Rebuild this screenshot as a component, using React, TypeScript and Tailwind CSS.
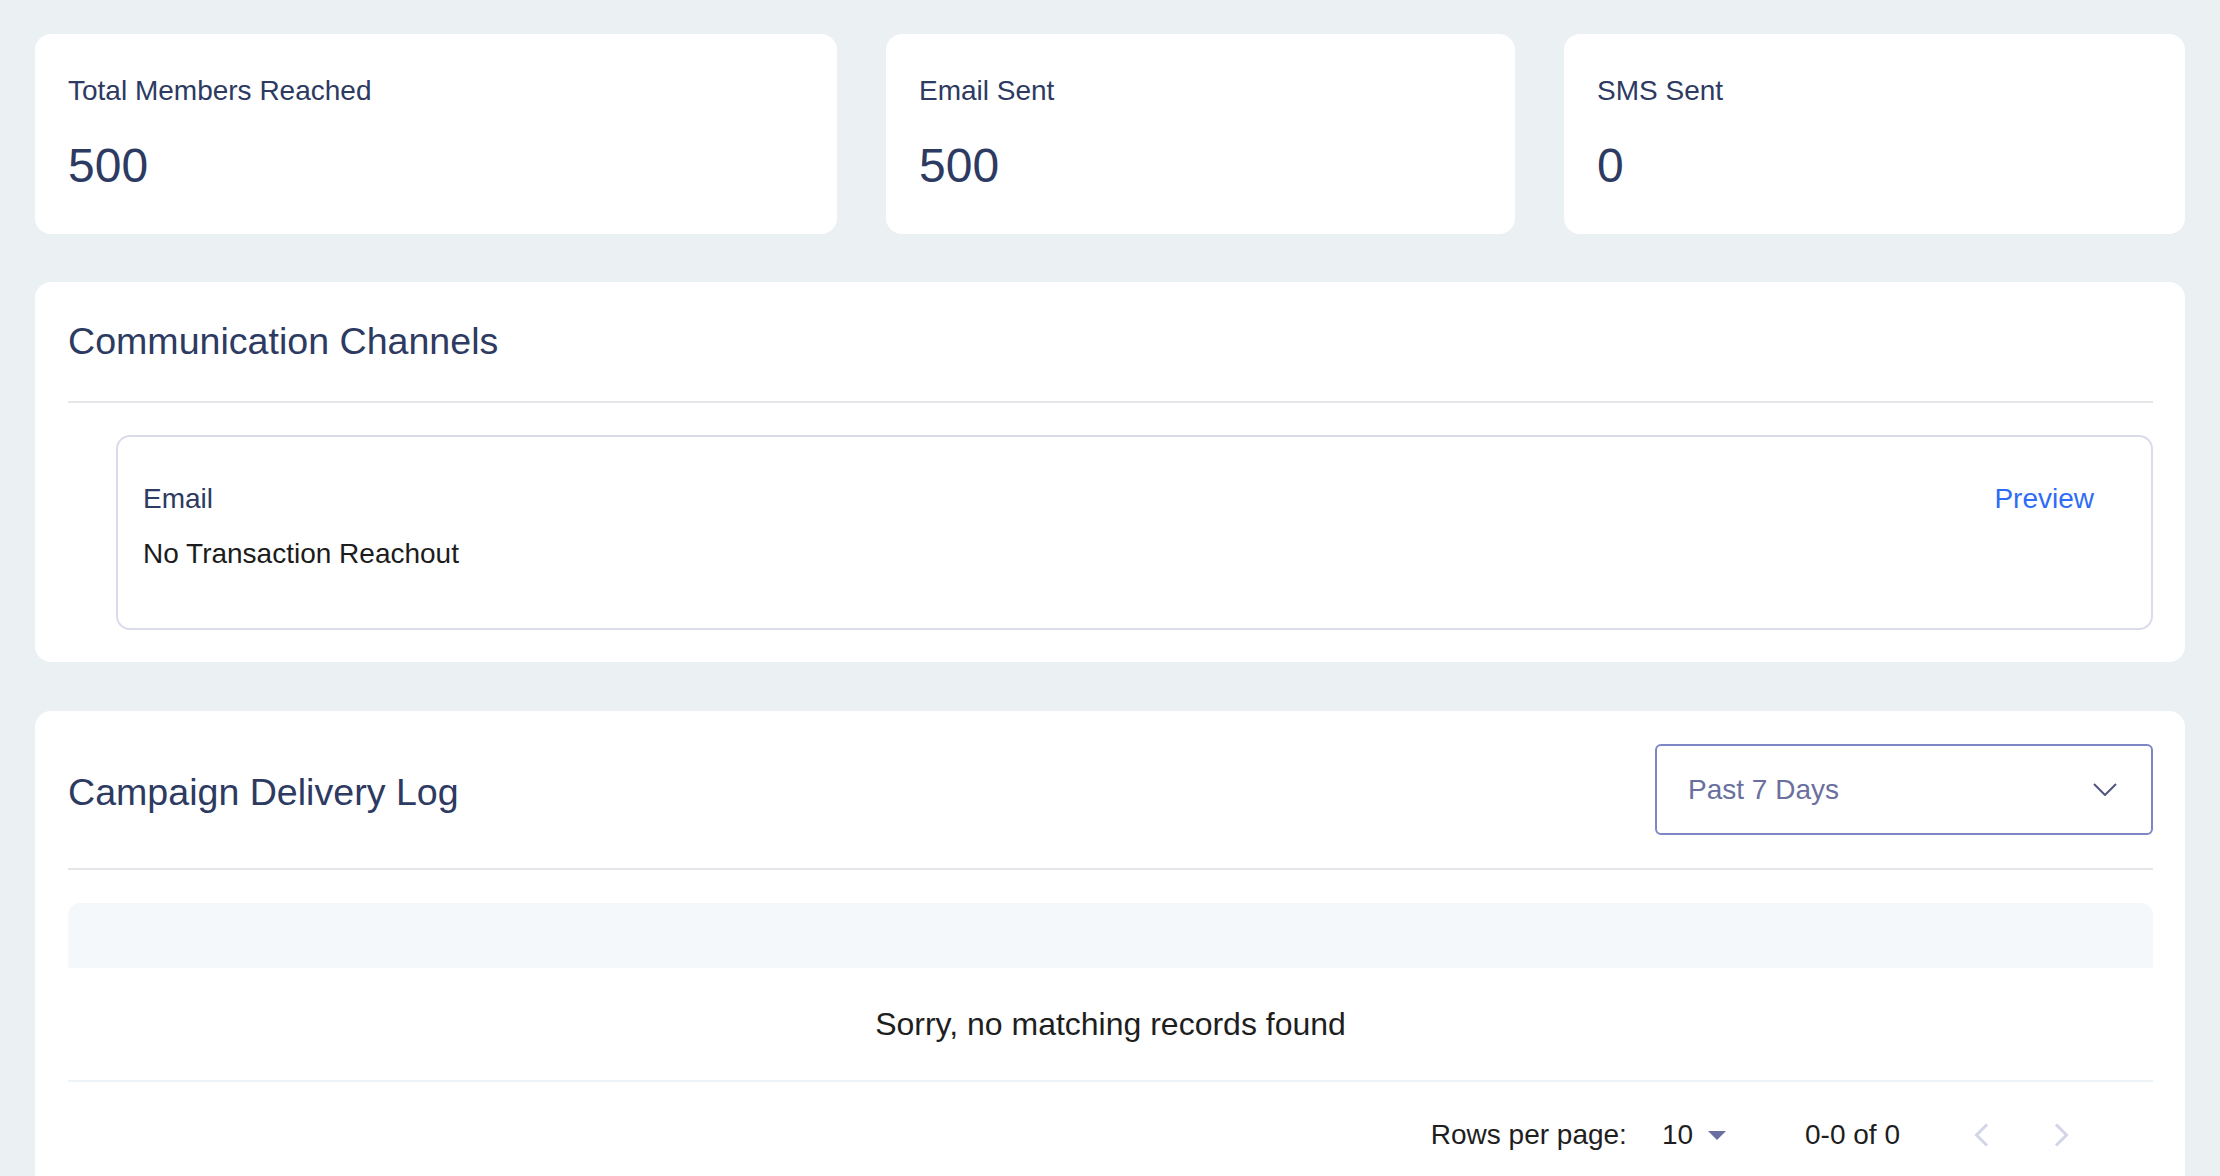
import React from "react";

const stats = [
  { label: "Total Members Reached", value: "500", width: "w-[802px]" },
  { label: "Email Sent", value: "500", width: "w-[629px]" },
  { label: "SMS Sent", value: "0", width: "flex-1" },
];

function StatCard({ label, value, width }: { label: string; value: string; width: string }) {
  return (
    <div className={`${width} h-[200px] rounded-[16px] bg-white pl-[33px] pt-[41px]`}>
      <div className="text-[28px] leading-[32px] text-[#2d3a62]">{label}</div>
      <div className="mt-[35px] text-[48px] leading-[48px] text-[#2d3a62]">{value}</div>
    </div>
  );
}

export default function App() {
  return (
    <div className="min-h-screen bg-[#ebf0f3] px-[35px] pt-[34px] font-['Liberation_Sans',Arial,sans-serif]">
      {/* stat cards */}
      <div className="flex gap-[49px]">
        {stats.map((s) => (
          <StatCard key={s.label} {...s} />
        ))}
      </div>

      {/* Communication Channels */}
      <div className="mt-[48px] rounded-[16px] bg-white pl-[33px] pr-[32px] pt-[37px] pb-[32px]">
        <h2 className="text-[37.6px] leading-[44px] text-[#2d3a62]">Communication Channels</h2>
        <div className="mt-[38px] h-[2px] bg-[#e4e6e9]" />
        <div className="ml-[48px] mt-[32px] flex h-[195px] items-start justify-between rounded-[14px] border-2 border-[#dadcec] pl-[25px] pr-[57px] pt-[46px]">
          <div>
            <div className="text-[28px] leading-[32px] text-[#2d3a62]">Email</div>
            <div className="mt-[23px] text-[28px] leading-[32px] text-[#1c1c1c]">No Transaction Reachout</div>
          </div>
          <button className="text-[28px] leading-[32px] text-[#2f6cf5]">Preview</button>
        </div>
      </div>

      {/* Campaign Delivery Log */}
      <div className="mt-[49px] rounded-t-[16px] bg-white pl-[33px] pr-[32px] pt-[33px] pb-[40px]">
        <div className="flex items-center justify-between">
          <h2 className="pt-[4px] text-[37.6px] leading-[44px] text-[#2d3a62]">Campaign Delivery Log</h2>
          <div className="flex h-[91px] w-[498px] items-center justify-between rounded-[6px] border-2 border-[#7f86c6] pl-[31px] pr-[34px]">
            <span className="text-[28px] leading-[32px] text-[#6a6f9f]">Past 7 Days</span>
            <svg width="24" height="13" viewBox="0 0 24 13" fill="none">
              <polyline points="1,1 12,12 23,1" stroke="#50557f" strokeWidth="2" />
            </svg>
          </div>
        </div>
        <div className="mt-[33px] h-[2px] bg-[#e4e6e9]" />

        {/* table */}
        <div className="mt-[33px] h-[65px] rounded-t-[12px] bg-[#f5f8fb]" />
        <div className="flex h-[114px] items-center justify-center border-b-2 border-[#eef3f8]">
          <span className="text-[32px] leading-[37px] text-[#1e1e1e]">Sorry, no matching records found</span>
        </div>
        <div className="flex items-center justify-end pt-[37px] text-[28px] leading-[32px] text-[#1e1e1e]">
          <span>Rows per page:</span>
          <span className="ml-[35px]">10</span>
          <svg className="ml-[15px]" width="18" height="9" viewBox="0 0 18 9">
            <path d="M0 0 L9 9 L18 0 Z" fill="#6b6fa0" />
          </svg>
          <span className="ml-[79px]">0-0 of 0</span>
          <svg className="ml-[74px]" width="15" height="24" viewBox="0 0 15 24" fill="none">
            <polyline points="13,1.5 2.5,12 13,22.5" stroke="#d3d5e8" strokeWidth="3" />
          </svg>
          <svg className="ml-[65px] mr-[84px]" width="15" height="24" viewBox="0 0 15 24" fill="none">
            <polyline points="2,1.5 12.5,12 2,22.5" stroke="#d3d5e8" strokeWidth="3" />
          </svg>
        </div>
      </div>
    </div>
  );
}
